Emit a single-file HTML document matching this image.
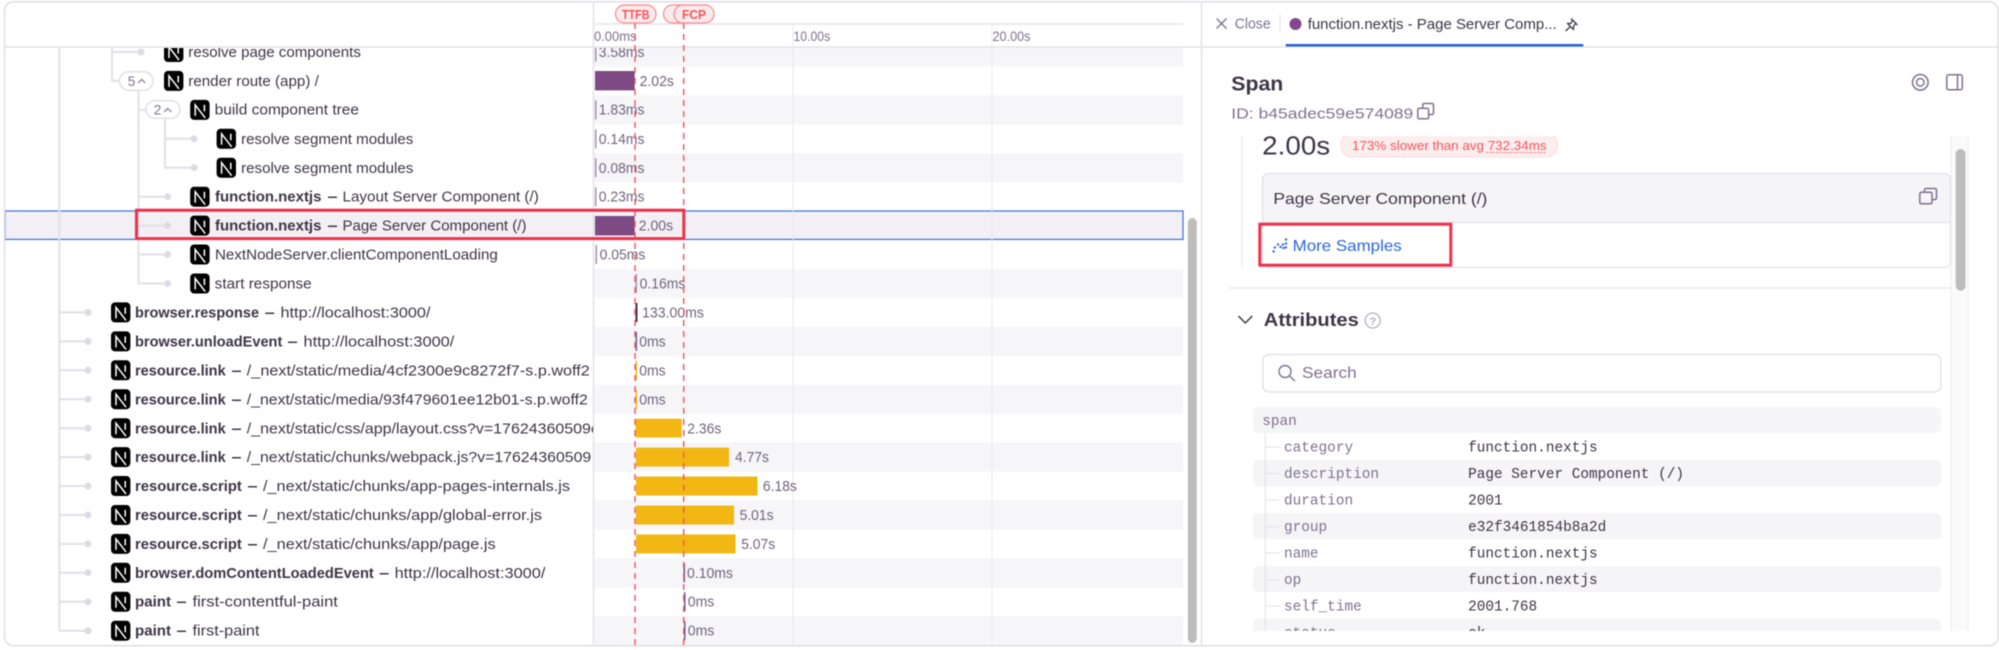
<!DOCTYPE html>
<html lang="en"><head><meta charset="utf-8"><title>Trace</title>
<style>
html,body{margin:0;padding:0;background:#fff;width:1999px;height:650px;overflow:hidden}
svg{display:block;filter:blur(.4px)}
text{font-family:"Liberation Sans",sans-serif;white-space:pre}
.t{font-size:15px;fill:#3e3446}
.d{font-size:15px;fill:#3e3446;font-weight:700}
.b{font-size:15px;fill:#3e3446;font-weight:700}
.l{font-size:14.5px;fill:#71637e}
.k{font-size:14px;fill:#80708f}
.m{font-family:"Liberation Mono",monospace;font-size:14.4px;fill:#80708f}
.v{font-family:"Liberation Mono",monospace;font-size:14.4px;fill:#3e3446}
.n{fill:none;stroke:#fff;stroke-width:1.5}
.ln{stroke:#e2dfe8;stroke-width:2;fill:none}
.dot{fill:#dedbe4}
.band{fill:#f6f6f9}
.ic{fill:none;stroke:#80708f;stroke-width:1.5}
</style></head><body>
<svg width="1999" height="650" viewBox="0 0 1999 650" xmlns="http://www.w3.org/2000/svg">
<defs>
<clipPath id="tree"><rect x="5" y="48" width="588" height="597"/></clipPath>
<clipPath id="tl"><rect x="594" y="48" width="600" height="597"/></clipPath>
<clipPath id="det"><rect x="1202" y="136" width="790" height="495"/></clipPath>
</defs>
<rect width="1999" height="650" fill="#fff"/>

<!-- timeline bands -->
<g clip-path="url(#tl)">
<rect class="band" x="594" y="37.5" width="589" height="29"/>
<rect class="band" x="594" y="95.4" width="589" height="29"/>
<rect class="band" x="594" y="153.3" width="589" height="29"/>
<rect class="band" x="594" y="269" width="589" height="29"/>
<rect class="band" x="594" y="327" width="589" height="29"/>
<rect class="band" x="594" y="384.8" width="589" height="29"/>
<rect class="band" x="594" y="442.6" width="589" height="29"/>
<rect class="band" x="594" y="500.5" width="589" height="29"/>
<rect class="band" x="594" y="558.4" width="589" height="29"/>
<rect class="band" x="594" y="616.2" width="589" height="29"/>
</g>
<!-- selected -->
<rect x="5" y="211" width="1178" height="28.4" fill="#f2f0f5" stroke="#3d71d1" stroke-width="1.2"/>
<!-- grid -->
<path d="M793 24V645M992 24V645" stroke="#e9e7ee" stroke-width="1" fill="none"/>

<!-- frame lines -->
<path d="M593.5 2V645M1201.5 2V645" stroke="#e4e2e9" stroke-width="1.5" fill="none"/>
<path d="M5 47H1998" stroke="#e4e2e9" stroke-width="1.5" fill="none"/>
<path d="M594 24H1183" stroke="#ebe9ef" stroke-width="2" fill="none"/>

<!-- tree lines -->
<g clip-path="url(#tree)">
<path class="ln" d="M59.3 47V630.7M59.3 312.4H88M59.3 341.4H88M59.3 370.3H88M59.3 399.2H88M59.3 428.2H88M59.3 457.1H88M59.3 486H88M59.3 515H88M59.3 543.9H88M59.3 572.8H88M59.3 601.8H88M59.3 630.7H88"/>
<path class="ln" d="M112 47V80.9H120M112 52H141"/>
<path class="ln" d="M138.5 90V283.5H167.6M138.5 109.9H146M138.5 196.7H167.6M138.5 225.6H167.6M138.5 254.5H167.6"/>
<path class="ln" d="M165 118V167.7H194M165 138.8H194"/>
<g class="dot">
<circle cx="141" cy="52" r="3.5"/><circle cx="194" cy="138.8" r="3.5"/><circle cx="194" cy="167.7" r="3.5"/>
<circle cx="167.6" cy="196.7" r="3.5"/><circle cx="167.6" cy="225.6" r="3.5"/><circle cx="167.6" cy="254.5" r="3.5"/><circle cx="167.6" cy="283.5" r="3.5"/>
<circle cx="88" cy="312.4" r="3.5"/><circle cx="88" cy="341.4" r="3.5"/><circle cx="88" cy="370.3" r="3.5"/><circle cx="88" cy="399.2" r="3.5"/><circle cx="88" cy="428.2" r="3.5"/><circle cx="88" cy="457.1" r="3.5"/><circle cx="88" cy="486" r="3.5"/><circle cx="88" cy="515" r="3.5"/><circle cx="88" cy="543.9" r="3.5"/><circle cx="88" cy="572.8" r="3.5"/><circle cx="88" cy="601.8" r="3.5"/><circle cx="88" cy="630.7" r="3.5"/>
</g>
<!-- collapse pills -->
<rect x="119.5" y="71.7" width="33.5" height="18.5" rx="9.25" fill="#fff" stroke="#e2dfe8" stroke-width="1.5"/>
<text class="k" x="127.8" y="86" textLength="7.6" lengthAdjust="spacingAndGlyphs">5</text>
<path d="M138 83L141.7 79.5L145.4 83" fill="none" stroke="#80708f" stroke-width="1.2"/>
<rect x="146" y="100.7" width="34" height="17.6" rx="8.8" fill="#fff" stroke="#e2dfe8" stroke-width="1.5"/>
<text class="k" x="153.8" y="114.5" textLength="7.6" lengthAdjust="spacingAndGlyphs">2</text>
<path d="M164 112L167.7 108.5L171.4 112" fill="none" stroke="#80708f" stroke-width="1.2"/>

<!-- N icons -->
<g transform="translate(164,42)"><rect width="19.4" height="20" rx="4"/><path class="n" d="M5 16V5L15 18M14.2 5V11.5"/></g>
<g transform="translate(164,70.9)"><rect width="19.4" height="20" rx="4"/><path class="n" d="M5 16V5L15 18M14.2 5V11.5"/></g>
<g transform="translate(190.2,99.9)"><rect width="19.4" height="20" rx="4"/><path class="n" d="M5 16V5L15 18M14.2 5V11.5"/></g>
<g transform="translate(216.6,128.8)"><rect width="19.4" height="20" rx="4"/><path class="n" d="M5 16V5L15 18M14.2 5V11.5"/></g>
<g transform="translate(216.6,157.7)"><rect width="19.4" height="20" rx="4"/><path class="n" d="M5 16V5L15 18M14.2 5V11.5"/></g>
<g transform="translate(190.2,186.7)"><rect width="19.4" height="20" rx="4"/><path class="n" d="M5 16V5L15 18M14.2 5V11.5"/></g>
<g transform="translate(190.2,215.6)"><rect width="19.4" height="20" rx="4"/><path class="n" d="M5 16V5L15 18M14.2 5V11.5"/></g>
<g transform="translate(190.2,244.5)"><rect width="19.4" height="20" rx="4"/><path class="n" d="M5 16V5L15 18M14.2 5V11.5"/></g>
<g transform="translate(190.2,273.5)"><rect width="19.4" height="20" rx="4"/><path class="n" d="M5 16V5L15 18M14.2 5V11.5"/></g>
<g transform="translate(111,302.4)"><rect width="19.4" height="20" rx="4"/><path class="n" d="M5 16V5L15 18M14.2 5V11.5"/></g>
<g transform="translate(111,331.4)"><rect width="19.4" height="20" rx="4"/><path class="n" d="M5 16V5L15 18M14.2 5V11.5"/></g>
<g transform="translate(111,360.3)"><rect width="19.4" height="20" rx="4"/><path class="n" d="M5 16V5L15 18M14.2 5V11.5"/></g>
<g transform="translate(111,389.2)"><rect width="19.4" height="20" rx="4"/><path class="n" d="M5 16V5L15 18M14.2 5V11.5"/></g>
<g transform="translate(111,418.2)"><rect width="19.4" height="20" rx="4"/><path class="n" d="M5 16V5L15 18M14.2 5V11.5"/></g>
<g transform="translate(111,447.1)"><rect width="19.4" height="20" rx="4"/><path class="n" d="M5 16V5L15 18M14.2 5V11.5"/></g>
<g transform="translate(111,476)"><rect width="19.4" height="20" rx="4"/><path class="n" d="M5 16V5L15 18M14.2 5V11.5"/></g>
<g transform="translate(111,505)"><rect width="19.4" height="20" rx="4"/><path class="n" d="M5 16V5L15 18M14.2 5V11.5"/></g>
<g transform="translate(111,533.9)"><rect width="19.4" height="20" rx="4"/><path class="n" d="M5 16V5L15 18M14.2 5V11.5"/></g>
<g transform="translate(111,562.8)"><rect width="19.4" height="20" rx="4"/><path class="n" d="M5 16V5L15 18M14.2 5V11.5"/></g>
<g transform="translate(111,591.8)"><rect width="19.4" height="20" rx="4"/><path class="n" d="M5 16V5L15 18M14.2 5V11.5"/></g>
<g transform="translate(111,620.7)"><rect width="19.4" height="20" rx="4"/><path class="n" d="M5 16V5L15 18M14.2 5V11.5"/></g>

<!-- tree text -->
<text class="t" x="188.3" y="57" textLength="172.6" lengthAdjust="spacingAndGlyphs">resolve page components</text>
<text class="t" x="188.3" y="86" textLength="130.5" lengthAdjust="spacingAndGlyphs">render route (app) /</text>
<text class="t" x="214.7" y="114.5" textLength="144.3" lengthAdjust="spacingAndGlyphs">build component tree</text>
<text class="t" x="241.1" y="144" textLength="172.2" lengthAdjust="spacingAndGlyphs">resolve segment modules</text>
<text class="t" x="241.1" y="173" textLength="172.2" lengthAdjust="spacingAndGlyphs">resolve segment modules</text>
<text class="b" x="215" y="201.5" textLength="106.4" lengthAdjust="spacingAndGlyphs">function.nextjs</text>
<text class="d" x="328" y="201.5" textLength="9" lengthAdjust="spacingAndGlyphs">—</text>
<text class="t" x="342.5" y="201.5" textLength="196.3" lengthAdjust="spacingAndGlyphs">Layout Server Component (/)</text>
<text class="b" x="215" y="230.5" textLength="106.4" lengthAdjust="spacingAndGlyphs">function.nextjs</text>
<text class="d" x="328" y="230.5" textLength="9" lengthAdjust="spacingAndGlyphs">—</text>
<text class="t" x="342.5" y="230.5" textLength="184" lengthAdjust="spacingAndGlyphs">Page Server Component (/)</text>
<text class="t" x="215" y="259.5" textLength="282.8" lengthAdjust="spacingAndGlyphs">NextNodeServer.clientComponentLoading</text>
<text class="t" x="214.7" y="288.5" textLength="97" lengthAdjust="spacingAndGlyphs">start response</text>
<text class="b" x="135" y="317.5" textLength="124" lengthAdjust="spacingAndGlyphs">browser.response</text>
<text class="d" x="265.2" y="317.5" textLength="9" lengthAdjust="spacingAndGlyphs">—</text>
<text class="t" x="280.5" y="317.5" textLength="150" lengthAdjust="spacingAndGlyphs">http://localhost:3000/</text>
<text class="b" x="135" y="346.5" textLength="147.3" lengthAdjust="spacingAndGlyphs">browser.unloadEvent</text>
<text class="d" x="288" y="346.5" textLength="9" lengthAdjust="spacingAndGlyphs">—</text>
<text class="t" x="303.5" y="346.5" textLength="150.8" lengthAdjust="spacingAndGlyphs">http://localhost:3000/</text>
<text class="b" x="135" y="375.5" textLength="90.7" lengthAdjust="spacingAndGlyphs">resource.link</text>
<text class="d" x="232" y="375.5" textLength="9" lengthAdjust="spacingAndGlyphs">—</text>
<text class="t" x="246.8" y="375.5" textLength="343" lengthAdjust="spacingAndGlyphs">/_next/static/media/4cf2300e9c8272f7-s.p.woff2</text>
<text class="b" x="135" y="404.5" textLength="90.7" lengthAdjust="spacingAndGlyphs">resource.link</text>
<text class="d" x="232" y="404.5" textLength="9" lengthAdjust="spacingAndGlyphs">—</text>
<text class="t" x="246.8" y="404.5" textLength="341" lengthAdjust="spacingAndGlyphs">/_next/static/media/93f479601ee12b01-s.p.woff2</text>
<text class="b" x="135" y="433.5" textLength="90.7" lengthAdjust="spacingAndGlyphs">resource.link</text>
<text class="d" x="232" y="433.5" textLength="9" lengthAdjust="spacingAndGlyphs">—</text>
<text class="t" x="246.8" y="433.5" textLength="353" lengthAdjust="spacingAndGlyphs">/_next/static/css/app/layout.css?v=17624360509e</text>
<text class="b" x="135" y="462" textLength="90.7" lengthAdjust="spacingAndGlyphs">resource.link</text>
<text class="d" x="232" y="462" textLength="9" lengthAdjust="spacingAndGlyphs">—</text>
<text class="t" x="246.8" y="462" textLength="344.4" lengthAdjust="spacingAndGlyphs">/_next/static/chunks/webpack.js?v=17624360509</text>
<text class="b" x="135" y="491" textLength="106.8" lengthAdjust="spacingAndGlyphs">resource.script</text>
<text class="d" x="248" y="491" textLength="9" lengthAdjust="spacingAndGlyphs">—</text>
<text class="t" x="263" y="491" textLength="307" lengthAdjust="spacingAndGlyphs">/_next/static/chunks/app-pages-internals.js</text>
<text class="b" x="135" y="520" textLength="106.8" lengthAdjust="spacingAndGlyphs">resource.script</text>
<text class="d" x="248" y="520" textLength="9" lengthAdjust="spacingAndGlyphs">—</text>
<text class="t" x="263" y="520" textLength="279" lengthAdjust="spacingAndGlyphs">/_next/static/chunks/app/global-error.js</text>
<text class="b" x="135" y="549" textLength="106.8" lengthAdjust="spacingAndGlyphs">resource.script</text>
<text class="d" x="248" y="549" textLength="9" lengthAdjust="spacingAndGlyphs">—</text>
<text class="t" x="263" y="549" textLength="232.7" lengthAdjust="spacingAndGlyphs">/_next/static/chunks/app/page.js</text>
<text class="b" x="135" y="578" textLength="238.8" lengthAdjust="spacingAndGlyphs">browser.domContentLoadedEvent</text>
<text class="d" x="379.6" y="578" textLength="9" lengthAdjust="spacingAndGlyphs">—</text>
<text class="t" x="394.6" y="578" textLength="150.8" lengthAdjust="spacingAndGlyphs">http://localhost:3000/</text>
<text class="b" x="135" y="606.5" textLength="36" lengthAdjust="spacingAndGlyphs">paint</text>
<text class="d" x="177" y="606.5" textLength="9" lengthAdjust="spacingAndGlyphs">—</text>
<text class="t" x="192.5" y="606.5" textLength="145.4" lengthAdjust="spacingAndGlyphs">first-contentful-paint</text>
<text class="b" x="135" y="635.5" textLength="36" lengthAdjust="spacingAndGlyphs">paint</text>
<text class="d" x="177" y="635.5" textLength="9" lengthAdjust="spacingAndGlyphs">—</text>
<text class="t" x="192.5" y="635.5" textLength="67" lengthAdjust="spacingAndGlyphs">first-paint</text>
</g>

<!-- bars -->
<g clip-path="url(#tl)">
<rect x="595" y="42.5" width="1.5" height="19" fill="#a78fb3"/>
<rect x="595" y="71" width="39.7" height="19.4" fill="#7e4a83"/>
<rect x="595" y="100.4" width="1.5" height="19" fill="#a78fb3"/>
<rect x="595" y="129.3" width="1.5" height="19" fill="#a78fb3"/>
<rect x="595" y="158.2" width="1.5" height="19" fill="#a78fb3"/>
<rect x="595" y="187.2" width="1.5" height="19" fill="#a78fb3"/>
<rect x="595" y="216" width="39.7" height="19.4" fill="#7e4a83"/>
<rect x="595.5" y="245" width="1.5" height="19" fill="#a78fb3"/>
<rect x="635.5" y="274" width="1.5" height="19" fill="#a78fb3"/>
<rect x="635.5" y="303" width="2" height="19" fill="#3e3446"/>
<rect x="635.5" y="332" width="1.5" height="19" fill="#6a5f8c"/>
<rect x="635.5" y="361" width="1.5" height="19" fill="#f2b712"/>
<rect x="635.5" y="390" width="1.5" height="19" fill="#f2b712"/>
<rect x="635.5" y="418.7" width="46.2" height="18.8" fill="#f2b712"/>
<rect x="636" y="447.6" width="93" height="19" fill="#f2b712"/>
<rect x="636" y="476.5" width="121.5" height="19" fill="#f2b712"/>
<rect x="636" y="505.5" width="98" height="19" fill="#f2b712"/>
<rect x="636" y="534.4" width="99.5" height="19" fill="#f2b712"/>
<rect x="683.5" y="563.3" width="1.5" height="19" fill="#5e5a96"/>
<rect x="684" y="592.3" width="1.5" height="19" fill="#5e5a96"/>
<rect x="684" y="621.2" width="1.5" height="19" fill="#5e5a96"/>

<text class="l" x="598.8" y="57" textLength="45.7" lengthAdjust="spacingAndGlyphs">3.58ms</text>
<text class="l" x="639.6" y="86" textLength="34.3" lengthAdjust="spacingAndGlyphs">2.02s</text>
<text class="l" x="598.8" y="114.5" textLength="45.7" lengthAdjust="spacingAndGlyphs">1.83ms</text>
<text class="l" x="598.8" y="144" textLength="45.7" lengthAdjust="spacingAndGlyphs">0.14ms</text>
<text class="l" x="598.8" y="173" textLength="45.7" lengthAdjust="spacingAndGlyphs">0.08ms</text>
<text class="l" x="598.8" y="201.5" textLength="45.7" lengthAdjust="spacingAndGlyphs">0.23ms</text>
<text class="l" x="638.8" y="230.5" textLength="34.3" lengthAdjust="spacingAndGlyphs">2.00s</text>
<text class="l" x="599.6" y="259.5" textLength="45.7" lengthAdjust="spacingAndGlyphs">0.05ms</text>
<text class="l" x="639.6" y="288.5" textLength="45.7" lengthAdjust="spacingAndGlyphs">0.16ms</text>
<text class="l" x="642" y="317.5" textLength="62" lengthAdjust="spacingAndGlyphs">133.00ms</text>
<text class="l" x="639.2" y="346.5" textLength="26.5" lengthAdjust="spacingAndGlyphs">0ms</text>
<text class="l" x="639.2" y="375.5" textLength="26.5" lengthAdjust="spacingAndGlyphs">0ms</text>
<text class="l" x="639.2" y="404.5" textLength="26.5" lengthAdjust="spacingAndGlyphs">0ms</text>
<text class="l" x="687.3" y="433.5" textLength="34" lengthAdjust="spacingAndGlyphs">2.36s</text>
<text class="l" x="735" y="462" textLength="34" lengthAdjust="spacingAndGlyphs">4.77s</text>
<text class="l" x="762.9" y="491" textLength="34" lengthAdjust="spacingAndGlyphs">6.18s</text>
<text class="l" x="739.6" y="520" textLength="34" lengthAdjust="spacingAndGlyphs">5.01s</text>
<text class="l" x="741.2" y="549" textLength="34" lengthAdjust="spacingAndGlyphs">5.07s</text>
<text class="l" x="687" y="578" textLength="46" lengthAdjust="spacingAndGlyphs">0.10ms</text>
<text class="l" x="687.8" y="606.5" textLength="26.5" lengthAdjust="spacingAndGlyphs">0ms</text>
<text class="l" x="687.8" y="635.5" textLength="26.5" lengthAdjust="spacingAndGlyphs">0ms</text>
</g>

<!-- ruler labels -->
<text class="k" x="594" y="41" textLength="42.5" lengthAdjust="spacingAndGlyphs">0.00ms</text>
<text class="k" x="793.5" y="41" textLength="36.7" lengthAdjust="spacingAndGlyphs">10.00s</text>
<text class="k" x="992.5" y="41" textLength="38" lengthAdjust="spacingAndGlyphs">20.00s</text>

<!-- vital markers -->
<path d="M635 23V645M683.7 23V645" stroke="#f4515c" stroke-width="1.4" stroke-dasharray="6 5" fill="none"/>
<rect x="615.5" y="5" width="40.5" height="18" rx="9" fill="#fdeaeb" stroke="#f58a90" stroke-width="1.2"/>
<text x="622" y="19" font-size="12.5" font-weight="700" fill="#f1555c" textLength="27.5" lengthAdjust="spacingAndGlyphs">TTFB</text>
<rect x="663.5" y="5" width="30" height="18" rx="9" fill="#fdeaeb" stroke="#f58a90" stroke-width="1.2"/>
<rect x="674" y="5" width="40" height="18" rx="9" fill="#fdeaeb" stroke="#f58a90" stroke-width="1.2"/>
<text x="682" y="19" font-size="12.5" font-weight="700" fill="#f1555c" textLength="24" lengthAdjust="spacingAndGlyphs">FCP</text>

<!-- red highlight on row -->
<rect x="136.5" y="210.2" width="547.3" height="28.4" fill="none" stroke="#f0304a" stroke-width="3"/>

<!-- timeline scrollbar -->
<rect x="1187.8" y="218" width="9" height="425" rx="4.5" fill="#bdbdbd"/>

<!-- detail header -->
<path d="M1216.5 18.5L1226.5 28.5M1226.5 18.5L1216.5 28.5" stroke="#80708f" stroke-width="1.3" fill="none"/>
<text x="1234.7" y="28.5" font-size="14.5" fill="#80708f" textLength="36" lengthAdjust="spacingAndGlyphs">Close</text>
<path d="M1280 14V33" stroke="#e4e2e9" stroke-width="1"/>
<circle cx="1295.5" cy="24" r="6" fill="#83488c"/>
<text x="1307.7" y="29" font-size="15" fill="#3e3446" textLength="249" lengthAdjust="spacingAndGlyphs">function.nextjs - Page Server Comp...</text>
<path d="M1571 18.5L1577.5 25M1572.8 20.2L1570.8 23.4L1567.6 23.6L1573.4 29.4L1573.6 26.2L1575.8 23.2M1570.5 26.5L1565.5 31" fill="none" stroke="#3e3446" stroke-width="1.3"/>
<rect x="1285.7" y="44" width="297.6" height="2.5" fill="#2562d4"/>

<text x="1231.3" y="90.5" font-size="20" font-weight="700" fill="#3e3446" textLength="52" lengthAdjust="spacingAndGlyphs">Span</text>
<text x="1231.3" y="118.5" font-size="15" fill="#80708f" textLength="182" lengthAdjust="spacingAndGlyphs">ID: b45adec59e574089</text>
<path class="ic" d="M1422.7 108V105A1.5 1.5 0 0 1 1424.2 103.5H1432A1.5 1.5 0 0 1 1433.5 105V113A1.5 1.5 0 0 1 1432 114.5H1428.8"/>
<rect class="ic" x="1417.8" y="108.3" width="10.8" height="10.5" rx="1.5"/>
<circle class="ic" cx="1920.3" cy="82.3" r="7.8"/><circle class="ic" cx="1920.3" cy="82.3" r="3.8"/>
<rect class="ic" x="1946.8" y="74.8" width="15.5" height="15" rx="2"/><path class="ic" d="M1957.5 75V90"/>

<!-- detail content -->
<g clip-path="url(#det)">
<rect x="1951" y="136" width="17" height="495" fill="#fafafb"/>
<path d="M1951 136V631M1968 136V631" stroke="#eeecf1" stroke-width="1" fill="none"/>
<path d="M1242 136V268" stroke="#eeecf1" stroke-width="1.5" fill="none"/>
<text x="1262.2" y="154.5" font-size="26" fill="#3e3446" textLength="68" lengthAdjust="spacingAndGlyphs">2.00s</text>
<rect x="1341" y="133" width="216.4" height="24" rx="11" fill="#fdeeee" stroke="#fbdada"/>
<text x="1352" y="150" font-size="13" fill="#f1555c" textLength="194.6" lengthAdjust="spacingAndGlyphs">173% slower than avg 732.34ms</text>
<path d="M1486.7 152.5H1546.6" stroke="#f1555c" stroke-width="1" stroke-dasharray="1.5 1.5" fill="none"/>

<path d="M1269 173.5H1944a6 6 0 0 1 6 6V222.5H1263V179.5a6 6 0 0 1 6-6Z" fill="#f5f4f7"/>
<rect x="1262.5" y="173.5" width="688" height="94" rx="6" fill="none" stroke="#e4e2e9" stroke-width="1.3"/>
<path d="M1263 222.5H1950" stroke="#e4e2e9" stroke-width="1.3"/>
<text x="1273.4" y="204" font-size="16" fill="#3e3446" textLength="214" lengthAdjust="spacingAndGlyphs">Page Server Component (/)</text>
<path class="ic" d="M1924.5 192V190A1.5 1.5 0 0 1 1926 188.5H1935A1.5 1.5 0 0 1 1936.5 190V198A1.5 1.5 0 0 1 1935 199.5H1932.3"/>
<rect class="ic" x="1919.8" y="192.3" width="12.2" height="11.5" rx="1.5"/>
<g fill="#2a66d8">
<circle cx="1273.6" cy="251.5" r="1.2"/><circle cx="1274.8" cy="247.5" r="1.2"/><circle cx="1278" cy="244.5" r="1.2"/><circle cx="1280.5" cy="247" r="1.2"/><circle cx="1283" cy="244.5" r="1.2"/><circle cx="1283.5" cy="248" r="1.2"/><circle cx="1286" cy="239.5" r="1.2"/><circle cx="1286" cy="243.5" r="1.2"/><circle cx="1286" cy="247.5" r="1.2"/>
</g>
<text x="1292.7" y="251" font-size="16" fill="#2a66d8" textLength="109" lengthAdjust="spacingAndGlyphs">More Samples</text>
<rect x="1259.8" y="224.2" width="191" height="41" fill="none" stroke="#f0304a" stroke-width="3"/>

<path d="M1230 288H1951" stroke="#e4e2e9" stroke-width="1.3"/>

<path d="M1238.5 316L1245.3 323L1252.3 316" fill="none" stroke="#3e3446" stroke-width="1.4"/>
<text x="1263.8" y="326" font-size="18" font-weight="700" fill="#3e3446" textLength="95" lengthAdjust="spacingAndGlyphs">Attributes</text>
<circle cx="1372.7" cy="320.5" r="7.5" fill="none" stroke="#b6adc0" stroke-width="1.3"/>
<text x="1369.5" y="325" font-size="11" font-weight="700" fill="#b6adc0">?</text>

<rect x="1262.8" y="354.5" width="678" height="37.5" rx="6" fill="#fff" stroke="#e4e2e9" stroke-width="1.5"/>
<circle cx="1285" cy="371.5" r="6" fill="none" stroke="#80708f" stroke-width="1.4"/>
<path d="M1289.5 376L1295 381" stroke="#80708f" stroke-width="1.4"/>
<text x="1302" y="378" font-size="15.5" fill="#80708f" textLength="54.7" lengthAdjust="spacingAndGlyphs">Search</text>

<rect x="1253" y="407" width="688" height="26.3" rx="5" fill="#f5f5f8"/>
<rect x="1253" y="460" width="688" height="26.3" rx="5" fill="#f5f5f8"/>
<rect x="1253" y="513" width="688" height="26.3" rx="5" fill="#f5f5f8"/>
<rect x="1253" y="566" width="688" height="26.3" rx="5" fill="#f5f5f8"/>
<rect x="1253" y="619" width="688" height="26.3" rx="5" fill="#f5f5f8"/>
<path d="M1265.3 433V631M1265.3 447H1279.3M1265.3 473.5H1279.3M1265.3 500H1279.3M1265.3 526.7H1279.3M1265.3 553H1279.3M1265.3 579.7H1279.3M1265.3 606H1279.3" stroke="#e2dfe8" stroke-width="1" fill="none"/>

<text class="m" x="1262.2" y="425">span</text>
<text class="m" x="1284" y="451.5">category</text><text class="v" x="1468.1" y="451.5">function.nextjs</text>
<text class="m" x="1284" y="478">description</text><text class="v" x="1468.1" y="478">Page Server Component (/)</text>
<text class="m" x="1284" y="504.5">duration</text><text class="v" x="1468.1" y="504.5">2001</text>
<text class="m" x="1284" y="531">group</text><text class="v" x="1468.1" y="531">e32f3461854b8a2d</text>
<text class="m" x="1284" y="557.5">name</text><text class="v" x="1468.1" y="557.5">function.nextjs</text>
<text class="m" x="1284" y="584">op</text><text class="v" x="1468.1" y="584">function.nextjs</text>
<text class="m" x="1284" y="610.5">self_time</text><text class="v" x="1468.1" y="610.5">2001.768</text>
<text class="m" x="1284" y="637">status</text><text class="v" x="1468.1" y="637">ok</text>
<rect x="1955.7" y="149" width="9.8" height="141.7" rx="4.9" fill="#bdbdbd"/>
</g>

<!-- outer frame -->
<rect x="4.5" y="1.7" width="1993.5" height="644" rx="9" fill="none" stroke="#e0dde6" stroke-width="1.5"/>
</svg>
</body></html>
